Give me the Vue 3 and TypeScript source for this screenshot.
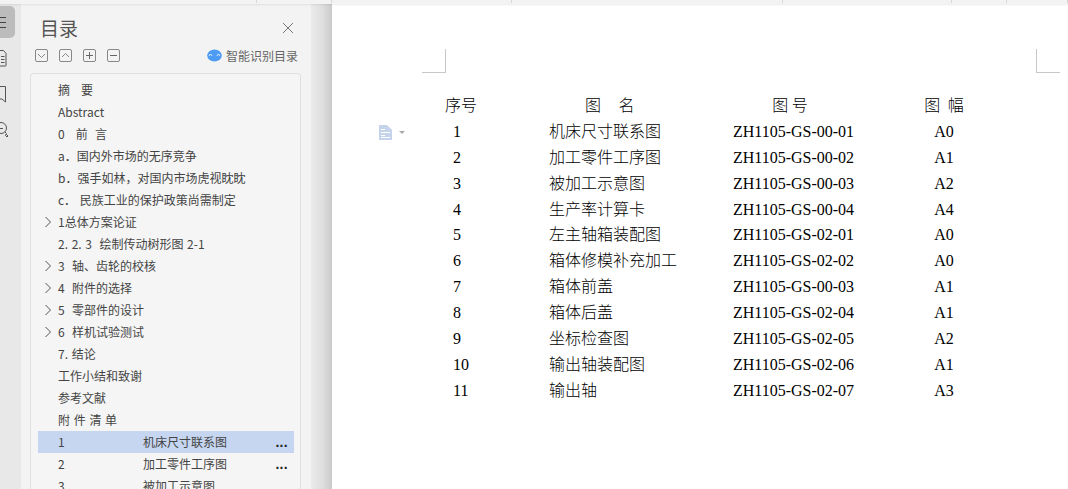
<script setup lang="ts">
interface TocItem { text: string; arrow?: boolean; name?: string; more?: boolean; active?: boolean }
const toc: TocItem[] = [
  { text: '摘   要' },
  { text: 'Abstract' },
  { text: '0   前  言' },
  { text: 'a．国内外市场的无序竞争' },
  { text: 'b．强手如林，对国内市场虎视眈眈' },
  { text: 'c． 民族工业的保护政策尚需制定' },
  { text: '1总体方案论证', arrow: true },
  { text: '2. 2. 3  绘制传动树形图 2-1' },
  { text: '3  轴、齿轮的校核', arrow: true },
  { text: '4  附件的选择', arrow: true },
  { text: '5  零部件的设计', arrow: true },
  { text: '6  样机试验测试', arrow: true },
  { text: '7. 结论' },
  { text: '工作小结和致谢' },
  { text: '参考文献' },
  { text: '附 件 清 单' },
  { text: '1', name: '机床尺寸联系图', more: true, active: true },
  { text: '2', name: '加工零件工序图', more: true },
  { text: '3', name: '被加工示意图' },
]
const rows: [string, string, string, string][] = [
  ['1', '机床尺寸联系图', 'ZH1105-GS-00-01', 'A0'],
  ['2', '加工零件工序图', 'ZH1105-GS-00-02', 'A1'],
  ['3', '被加工示意图', 'ZH1105-GS-00-03', 'A2'],
  ['4', '生产率计算卡', 'ZH1105-GS-00-04', 'A4'],
  ['5', '左主轴箱装配图', 'ZH1105-GS-02-01', 'A0'],
  ['6', '箱体修模补充加工', 'ZH1105-GS-02-02', 'A0'],
  ['7', '箱体前盖', 'ZH1105-GS-00-03', 'A1'],
  ['8', '箱体后盖', 'ZH1105-GS-02-04', 'A1'],
  ['9', '坐标检查图', 'ZH1105-GS-02-05', 'A2'],
  ['10', '输出轴装配图', 'ZH1105-GS-02-06', 'A1'],
  ['11', '输出轴', 'ZH1105-GS-02-07', 'A3'],
]
const segments: number[] = [257, 75, 180, 271, 169, 55, 61]
</script>

<template>
  <div class="app">
    <div class="topbar">
      <span v-for="(w, i) in segments" :key="i" class="seg" :style="{ width: w + 'px' }"></span>
    </div>
    <div class="main">
      <nav class="rail">
        <div class="rail-btn active">
          <svg width="15" height="32" viewBox="0 0 15 32"><path d="M0 11.500h6M0 16.500h6M0 21.500h6" stroke="#444" fill="none" /></svg>
        </div>
        <div class="rail-btn">
          <svg width="21" height="36" viewBox="0 0 21 36"><path d="M-2 10.500h5.500l2.500 3v12q0 .5-.5.5h-7.500M1 16.500h3.500M1 19.500h3.500M1 22.500h3.500" stroke="#555" fill="none" /></svg>
        </div>
        <div class="rail-btn">
          <svg width="21" height="36" viewBox="0 0 21 36"><path d="M-2 10.500h7.500v15.500l-3.500-3h-5" stroke="#555" fill="none" /></svg>
        </div>
        <div class="rail-btn">
          <svg width="21" height="36" viewBox="0 0 21 36"><circle cx="1" cy="16" r="5.500" stroke="#555" fill="none" /><path d="M5 20l1.500 1.500M5.500 23.500l1.500 1.500 1-1-2-2zM-1 16.500h4" stroke="#555" fill="none" /></svg>
        </div>
      </nav>
      <aside class="panel">
        <header class="panel-head">
          <h1 class="panel-title">目录</h1>
          <svg class="close" width="12" height="12" viewBox="0 0 12 12"><path d="M1 1l10 10M11 1L1 11" stroke="#777" fill="none" /></svg>
        </header>
        <div class="tools">
          <div class="tool-group">
            <span class="tool"><svg width="11" height="11" viewBox="0 0 11 11"><path d="M2 4l3.500 3.500L9 4" stroke="#888" fill="none" /></svg></span>
            <span class="tool"><svg width="11" height="11" viewBox="0 0 11 11"><path d="M2 7l3.500-3.500L9 7" stroke="#888" fill="none" /></svg></span>
            <span class="tool"><svg width="11" height="11" viewBox="0 0 11 11"><path d="M2 5.500h7M5.500 2v7" stroke="#666" fill="none" /></svg></span>
            <span class="tool"><svg width="11" height="11" viewBox="0 0 11 11"><path d="M2 5.500h7" stroke="#666" fill="none" /></svg></span>
          </div>
          <div class="smart">
            <svg width="15" height="13" viewBox="0 0 15 13"><ellipse cx="7.500" cy="6.500" rx="7.300" ry="6" fill="#4d9bf5" /><path d="M1.800 6.500q1.700-2 3.400 0M9.800 6.500q1.700-2 3.400 0" stroke="#fff" fill="none" /></svg>
            <span>智能识别目录</span>
          </div>
        </div>
        <div class="toc">
          <div v-for="(item, i) in toc" :key="i" class="toc-row" :class="{ active: item.active }">
            <svg v-if="item.arrow" class="arrow" width="8" height="12" viewBox="0 0 8 12"><path d="M1.500 1l5 5-5 5" stroke="#555" fill="none" /></svg>
            <span class="toc-text">{{ item.text }}</span>
            <span v-if="item.name" class="toc-name">{{ item.name }}</span>
            <span v-if="item.more" class="toc-more">...</span>
          </div>
        </div>
      </aside>
      <div class="gutter"></div>
      <main class="page">
        <div class="margins">
          <span class="corner left"></span>
          <span class="corner right"></span>
        </div>
        <div class="doc-icon">
          <svg width="14" height="15" viewBox="0 0 14 15"><path d="M0 0h8l5 5v10H0z" fill="#c5d4ea" /><path d="M2 4.500h4M2 7.500h9M2 10.500h4M2 12.500h9" stroke="#fff" fill="none" /></svg>
          <svg width="6" height="3" viewBox="0 0 6 3"><path d="M0 0h6L3 3z" fill="#aaa" /></svg>
        </div>
        <div class="table">
          <div class="tr head">
            <span class="c-no">序号</span>
            <span class="c-name">图 名</span>
            <span class="c-code">图 号</span>
            <span class="c-size">图 幅</span>
          </div>
          <div v-for="r in rows" :key="r[0]" class="tr">
            <span class="c-no">{{ r[0] }}</span>
            <span class="c-name">{{ r[1] }}</span>
            <span class="c-code">{{ r[2] }}</span>
            <span class="c-size">{{ r[3] }}</span>
          </div>
        </div>
      </main>
    </div>
  </div>
</template>

<style>
html, body { margin: 0; overflow: hidden; background: #fff; }
</style>

<style scoped>
.app { width: 1068px; height: 489px; display: flex; flex-direction: column; overflow: hidden; }
.topbar { height: 4px; flex: none; display: flex; background: #f3f3f3; box-shadow: 0 1px 2px rgba(0, 0, 0, .08); position: relative; z-index: 2; }
.seg { flex: none; height: 3px; box-sizing: border-box; border-right: 1px solid #d8d8d8; }
.main { flex: 1; display: flex; min-height: 0; }
.rail { width: 21px; flex: none; background: #e8e8e8; display: flex; flex-direction: column; }
.rail-btn { height: 36px; flex: none; overflow: hidden; }
.rail-btn svg { display: block; }
.rail-btn.active { height: 32px; width: 15px; margin: 2px 0; background: #bcbcbc; border-radius: 0 5px 5px 0; }
.panel { width: 290px; flex: none; background: #f3f3f3; display: flex; flex-direction: column; min-height: 0; }
.panel-head { height: 40px; flex: none; display: flex; align-items: center; justify-content: space-between; padding: 0 17px 0 19px; }
.panel-title { margin: 8px 0 0; font: 400 19px/28px "Noto Sans CJK SC", sans-serif; color: #555; }
.close { margin-top: 8px; }
.tools { height: 23px; flex: none; display: flex; align-items: center; justify-content: space-between; padding: 0 13px 0 14px; }
.tool-group { display: flex; gap: 11px; }
.tool { width: 11px; height: 11px; border: 1px solid #888; border-radius: 2px; display: flex; }
.smart { display: flex; align-items: center; gap: 4px; font: 12px/16px "Noto Sans CJK SC", sans-serif; color: #666; }
.toc { flex: 1; margin: 6px 10px 0 9px; padding-top: 5px; background: #f5f5f5; border: 1px solid #e0e0e0; border-bottom: 0; border-radius: 4px 4px 0 0; overflow: hidden; }
.toc-row { height: 22px; display: flex; align-items: center; position: relative; padding-left: 20px; margin: 0 6px 0 7px; font: 12px/22px "Noto Sans CJK SC", sans-serif; word-spacing: 1px; color: #444; white-space: pre; }
.toc-row.active { background: #c6d6f0; }
.arrow { position: absolute; left: 6px; top: 5px; }
.toc-text { flex: none; }
.toc-name { position: absolute; left: 105px; }
.toc-more { position: absolute; right: 6px; top: 0; font: 700 14px/22px "Liberation Sans", sans-serif; letter-spacing: .3px; color: #222; }
.gutter { width: 21px; flex: none; background: linear-gradient(90deg, #eaeaea 0, #dedede 55%, #cacaca 100%); }
.page { flex: 1; background: #fff; position: relative; min-width: 0; }
.margins { height: 69px; position: relative; }
.corner { position: absolute; top: 45px; width: 23px; height: 23px; border-bottom: 1px solid #c8c8c8; }
.corner.left { left: 90px; border-right: 1px solid #c8c8c8; }
.corner.right { left: 704px; border-left: 1px solid #c8c8c8; }
.doc-icon { position: absolute; left: 47px; top: 121px; display: flex; align-items: center; gap: 6px; }
.table { padding: 19px 0 0 113px; font: 16px/28px "Liberation Serif", "Noto Sans CJK SC", serif; color: #000; }
.tr { height: 25.900px; display: grid; grid-template-columns: 104px 168.500px 152px 149px; white-space: pre; }
.c-no { padding-left: 8px; }
.c-name { font-family: "Noto Sans CJK SC", sans-serif; font-weight: 300; line-height: 24px; }
.c-code, .c-size { text-align: center; }
.head span { font-family: "Noto Sans CJK SC", sans-serif; font-weight: 300; line-height: 25px; }
.head .c-no { padding-left: 0; }
.head .c-name { padding-left: 36px; word-spacing: 14px; }
.head .c-code { padding-right: 7px; }
.head .c-size { word-spacing: 4px; }
</style>
